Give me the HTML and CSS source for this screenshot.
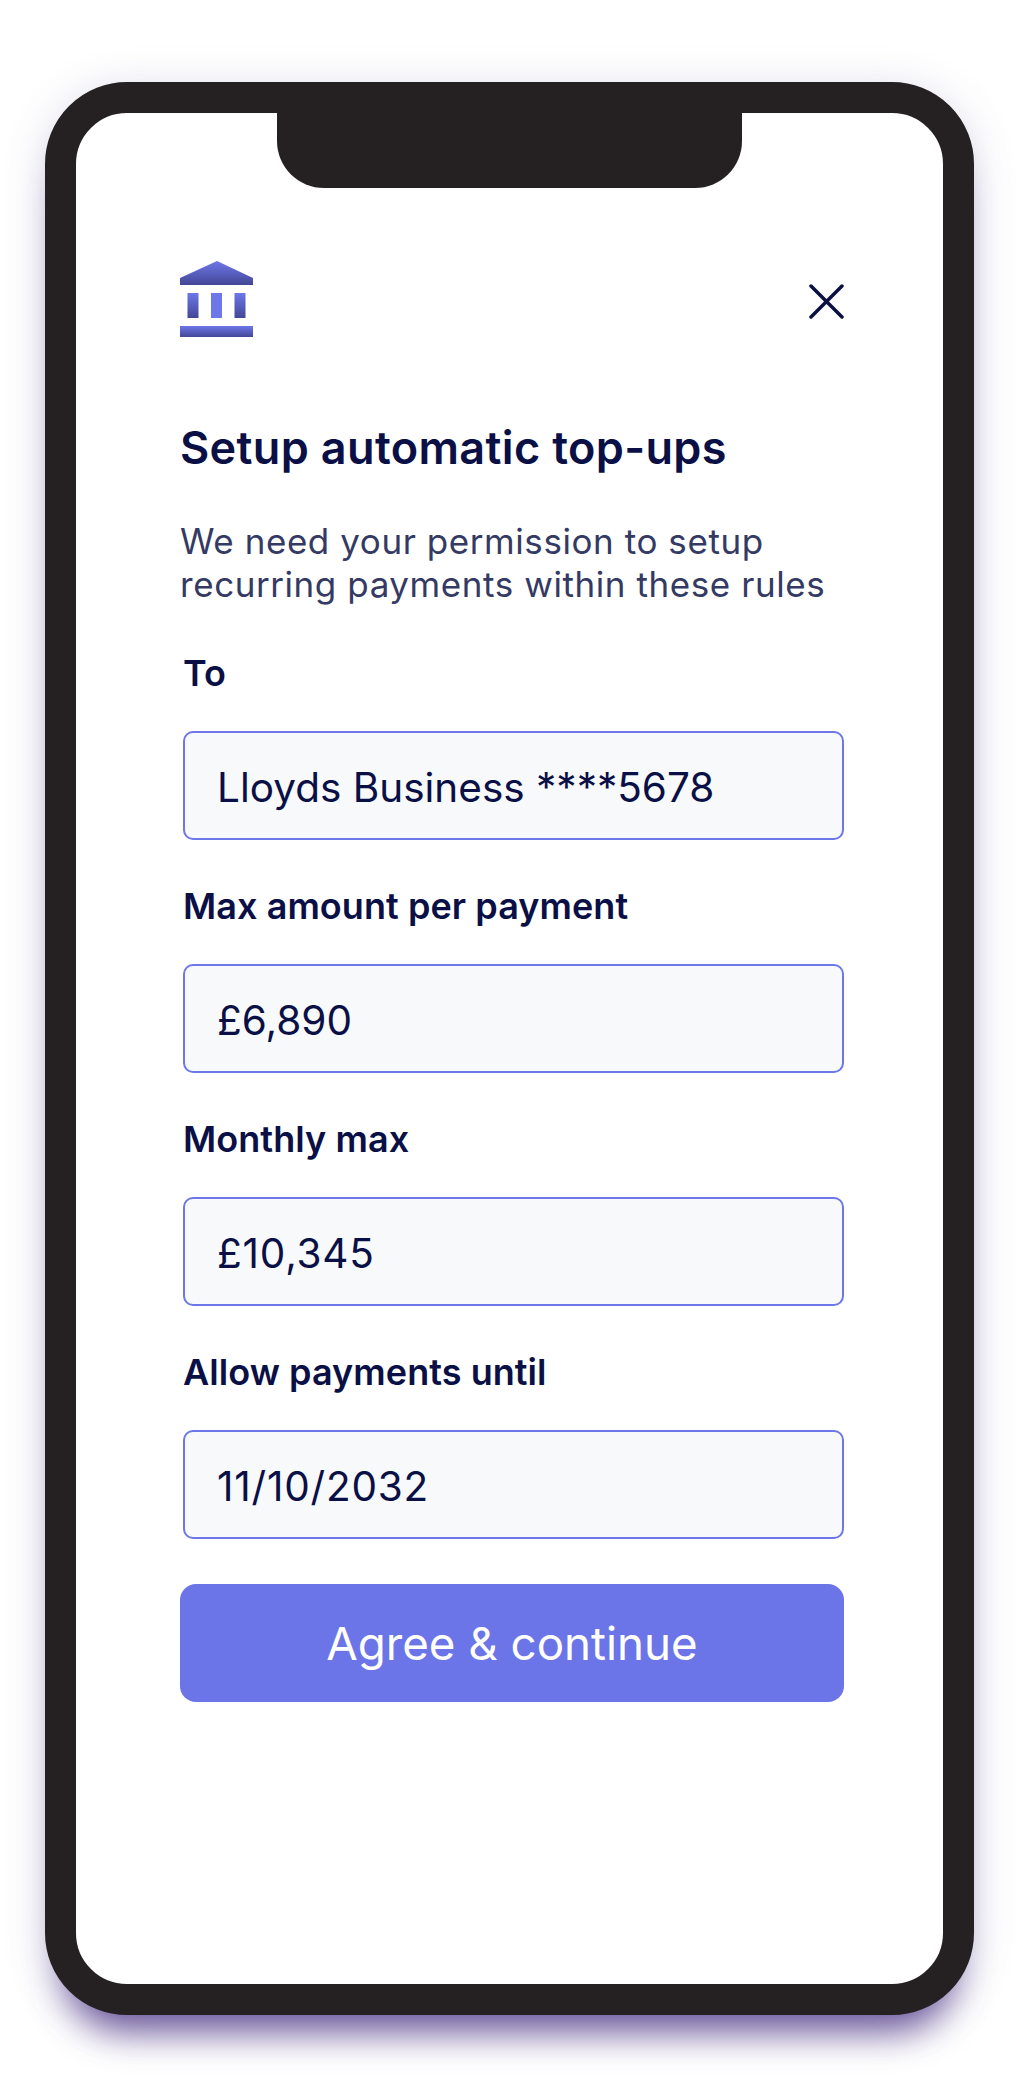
FILE: index.html
```html
<!DOCTYPE html>
<html>
<head>
    <title>Setup automatic top-ups</title>
    <meta name="viewport" content="width=device-width, initial-scale=1.0">
    <link rel="stylesheet" href="styles.css">
</head>
<body>
    <div class="phone">
        <div class="notch"></div>
        <div class="screen">
            <div class="top-row">
                <svg class="bank-icon" width="74" height="76" viewBox="0 0 74 76">
                    <defs>
                        <linearGradient id="bankFill" x1="0" y1="0" x2="0" y2="1">
                            <stop offset="0" stop-color="#6e77e9"/>
                            <stop offset="1" stop-color="#434796"/>
                        </linearGradient>
                    </defs>
                    <path fill="url(#bankFill)" d="M37 0 L73 17 V24 H0 V17 Z"/>
                    <rect fill="url(#bankFill)" x="7.5" y="32" width="11" height="25"/>
                    <rect fill="#6e77e9" x="31" y="32" width="11" height="25"/>
                    <rect fill="url(#bankFill)" x="54.500" y="32" width="11" height="25"/>
                    <rect fill="url(#bankFill)" x="0" y="65" width="73" height="11"/>
                </svg>
                <svg class="close-icon" width="35" height="35" viewBox="0 0 35 35">
                    <path d="M2 2 L33 33 M33 2 L2 33" stroke="#0b1040" stroke-width="3.500" stroke-linecap="round" fill="none"/>
                </svg>
            </div>

            <h1>Setup automatic top-ups</h1>
            <p class="intro">We need your permission to setup recurring payments within these rules</p>

            <div class="field first">
                <label>To</label>
                <div class="input">Lloyds Business ****5678</div>
            </div>
            <div class="field">
                <label>Max amount per payment</label>
                <div class="input">£6,890</div>
            </div>
            <div class="field">
                <label>Monthly max</label>
                <div class="input wide-digits">£10,345</div>
            </div>
            <div class="field">
                <label>Allow payments until</label>
                <div class="input wide-digits">11/10/2032</div>
            </div>

            <button class="agree-btn">Agree &amp; continue</button>
        </div>
    </div>
</body>
</html>
```

FILE: styles.css
```css
html, body { margin: 0; padding: 0; background: white; }
body { width: 1024px; height: 2098px; padding-top: 82px; box-sizing: border-box; overflow: hidden; font-family: Inter, "Liberation Sans", sans-serif; color: #0a1045; }

.phone { position: relative; width: 929px; height: 1933px; margin-left: 45px; box-sizing: border-box; border: 31px solid #252122; border-radius: 82px; background: white; box-shadow: 0 36px 36px -20px rgba(72, 48, 130, 0.8), 0 6px 44px rgba(90, 80, 150, 0.2); }
.notch { position: absolute; top: 0; left: 201px; width: 465px; height: 75px; background: #252122; border-radius: 0 0 47px 47px; }

.screen { padding: 148px 99px 0 104px; }
.top-row { display: flex; justify-content: space-between; align-items: flex-end; }
.bank-icon { display: block; }
.close-icon { display: block; margin-bottom: 18px; }

h1 { margin: 84px 0 0 0; font-size: 45px; line-height: 54px; font-weight: 600; letter-spacing: 0.35px; }
.intro { margin: 45px 0 0 0; font-size: 35px; line-height: 43px; letter-spacing: 0.57px; color: #343a63; }

.field { margin-top: 44px; }
.field.first { margin-top: 45px; }
.field label { display: block; margin-left: 3px; font-size: 36px; line-height: 44px; font-weight: 600; letter-spacing: 0.06px; }
.input { margin: 36px 0 0 3px; height: 109px; box-sizing: border-box; padding: 3px 32px 0 32px; display: flex; align-items: center; background: #f7f9fb; border: 2px solid #6e77e9; border-radius: 10px; font-size: 40.500px; }
.input.wide-digits { letter-spacing: 0.8px; }

.agree-btn { display: block; width: 100%; height: 118px; margin-top: 45px; background: #6c75e8; color: white; border: none; border-radius: 16px; font-family: Inter, "Liberation Sans", sans-serif; font-size: 45.700px; padding: 0; }
```
